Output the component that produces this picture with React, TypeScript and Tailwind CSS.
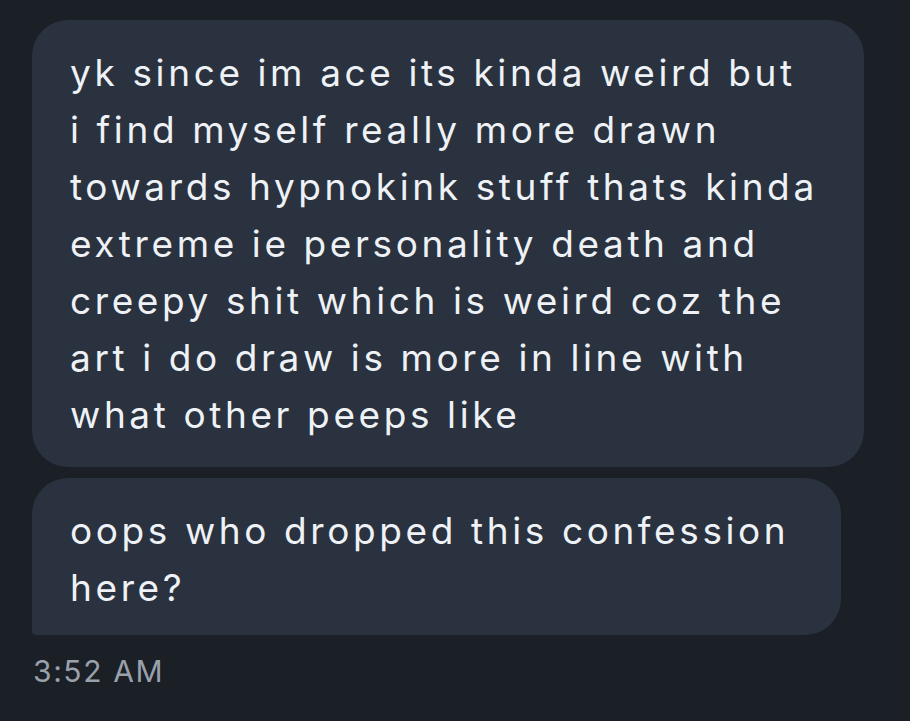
import React from 'react';

const firstLines = [
  'yk since im ace its kinda weird but',
  'i find myself really more drawn',
  'towards hypnokink stuff thats kinda',
  'extreme ie personality death and',
  'creepy shit which is weird coz the',
  'art i do draw is more in line with',
  'what other peeps like',
];

const secondLines = ['oops who dropped this confession', 'here?'];

const Bubble: React.FC<{ lines: string[]; className: string }> = ({ lines, className }) => (
  <div className={`bg-[#29323e] text-[#eef1f5] pl-[38px] text-[37px] leading-[57px] tracking-[3.6px] ${className}`}>
    {lines.map((line) => (
      <div key={line} className="whitespace-nowrap">
        {line}
      </div>
    ))}
  </div>
);

export default function App() {
  return (
    <div
      className="w-[910px] h-[721px] bg-[#1b1f26] pt-[20px] pl-[32px] overflow-hidden"
      style={{ fontFamily: 'Inter, "Noto Sans", sans-serif' }}
    >
      <div className="flex flex-col gap-[11px]">
        <Bubble lines={firstLines} className="w-[832px] pt-[24px] pb-[24px] rounded-[36px]" />
        <Bubble
          lines={secondLines}
          className="w-[809px] pt-[24px] pb-[19px] rounded-[36px] rounded-bl-[4px]"
        />
      </div>
      <div className="mt-[16px] text-[30px] leading-[40px] tracking-[1.6px] text-[#98a1ac] pl-[1px]">3:52 AM</div>
    </div>
  );
}
